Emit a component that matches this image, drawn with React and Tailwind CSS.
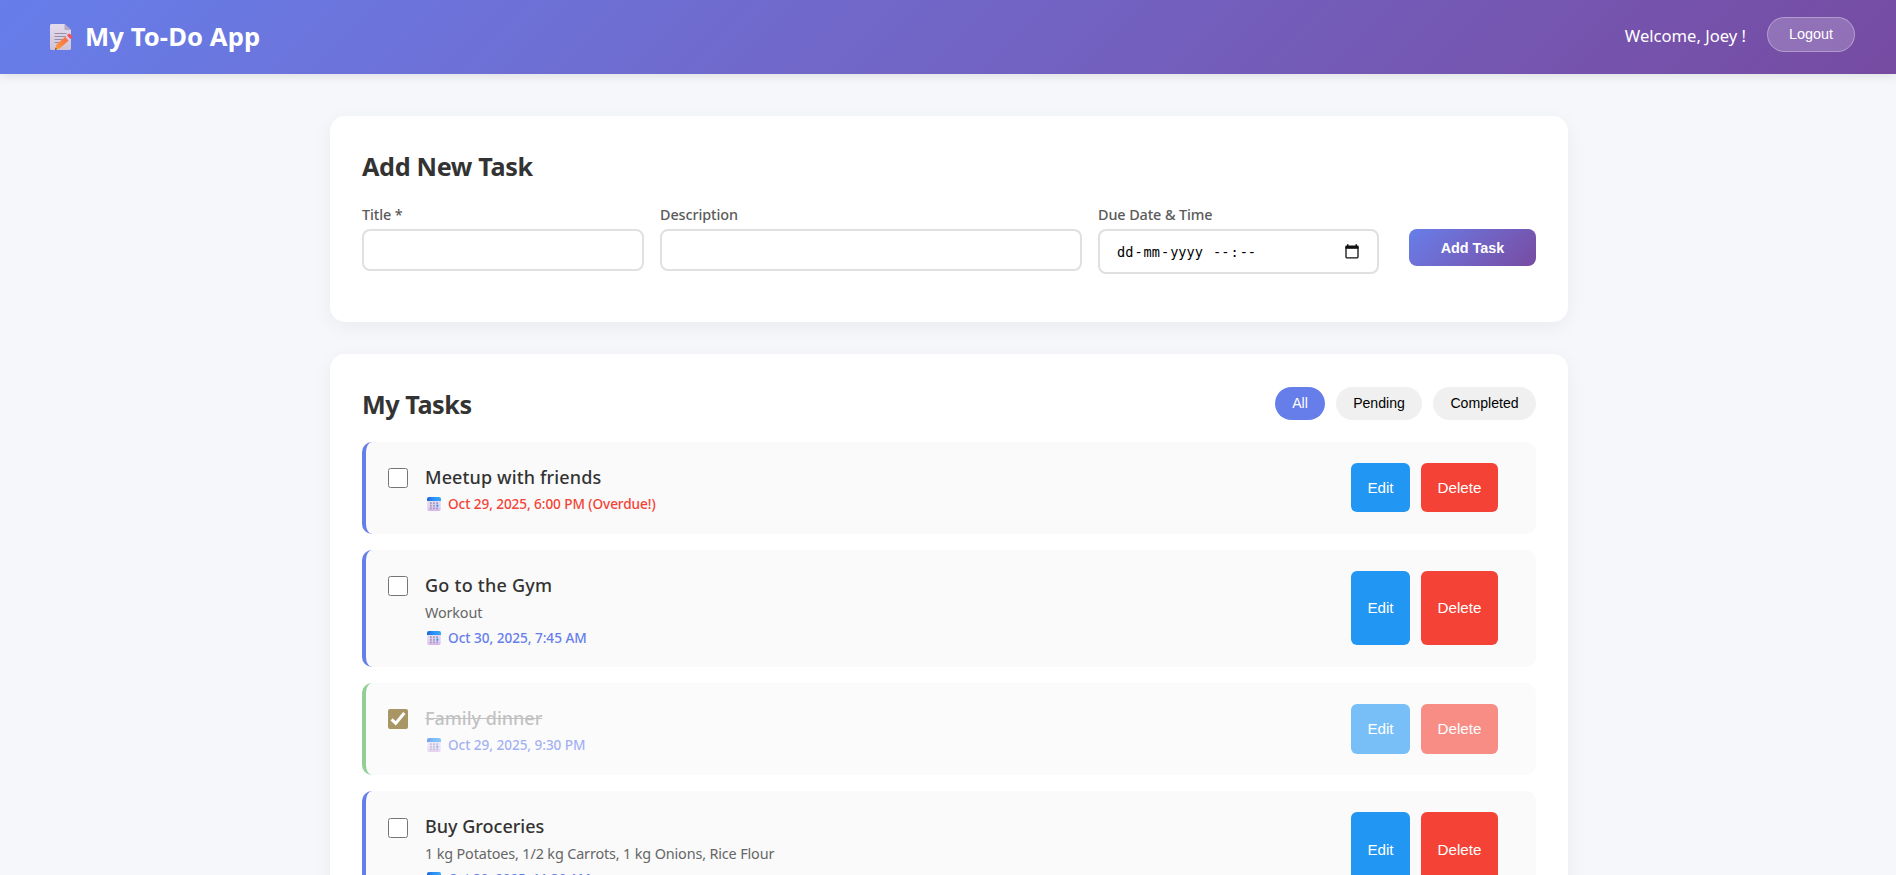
const F = "font-['Noto_Sans',sans-serif]";
const A = "font-['Liberation_Sans',Arial,sans-serif]";

function MemoIcon() {
  return (
    <svg width="24" height="28" viewBox="0 0 24 28" className="block">
      <defs>
        <linearGradient id="paper" x1="0" y1="0" x2="0" y2="1">
          <stop offset="0" stopColor="#e3dcee" />
          <stop offset="1" stopColor="#cfc4d6" />
        </linearGradient>
        <linearGradient id="pencil" x1="1" y1="0" x2="0" y2="1">
          <stop offset="0" stopColor="#f8664a" />
          <stop offset="1" stopColor="#ffa03c" />
        </linearGradient>
      </defs>
      <path d="M1.500 1H14.500l6.500 6v18.500a1.500 1.500 0 0 1-1.500 1.500h-18a1.500 1.500 0 0 1-1.500-1.500v-23A1.500 1.500 0 0 1 1.500 1z" fill="url(#paper)" />
      <path d="M14.500 1l6.500 6h-5.500a1 1 0 0 1-1-1z" fill="#b5a8c4" />
      <path d="M4.500 10.500H16.500M4.500 13.500H16M4.500 16.500H13M4.500 19.500H9" stroke="#9a8fa8" strokeWidth="1.100" />
      <path d="M6.300 21.700L15.300 13.800l3.400 3.800-8.900 7.800-4.600 1.500z" fill="url(#pencil)" />
      <path d="M15.300 13.800l1.700-1.500 3.400 3.800-1.700 1.500z" fill="#dccbe0" />
      <path d="M17 12.300l1.500-1.400q.8-.6 1.500 0l2.100 2.200q.6.800 0 1.500l-1.700 1.500z" fill="#f25252" />
      <path d="M5.700 24.500L6.900 26.300l-1.900.7z" fill="#5b3550" />
    </svg>
  );
}

function CalendarIcon() {
  return (
    <svg width="14" height="14" viewBox="0 0 14 14" className="block shrink-0">
      <defs>
        <linearGradient id="calTop" x1="0" y1="0" x2="1" y2="0">
          <stop offset="0" stopColor="#2264dc" />
          <stop offset="0.450" stopColor="#2b92f5" />
          <stop offset="1" stopColor="#36a6fb" />
        </linearGradient>
        <linearGradient id="calBody" x1="0" y1="0" x2="0" y2="1">
          <stop offset="0" stopColor="#e6def2" />
          <stop offset="0.700" stopColor="#e0d3f0" />
          <stop offset="1" stopColor="#d3b2ea" />
        </linearGradient>
      </defs>
      <rect x="0.300" y="0.500" width="13.400" height="13.500" rx="2" fill="url(#calBody)" />
      <path d="M0 4V2Q0 0 2 0h10q2 0 2 2v2z" fill="url(#calTop)" />
      <g fill="#a195ba">
        <rect x="3" y="5.300" width="1.700" height="1.800" /><rect x="6.100" y="5.300" width="1.700" height="1.800" /><rect x="9.200" y="5.300" width="1.700" height="1.800" />
        <rect x="3" y="7.900" width="1.700" height="1.800" /><rect x="6.100" y="7.900" width="1.700" height="1.800" />
        <rect x="3" y="10.500" width="1.700" height="1.600" /><rect x="6.100" y="10.500" width="1.700" height="1.600" /><rect x="9.200" y="10.500" width="1.700" height="1.600" />
      </g>
      <rect x="9.400" y="7.700" width="1.900" height="2" fill="#2f8df0" />
    </svg>
  );
}

function DateIcon() {
  return (
    <svg width="14" height="15" viewBox="0 0 14 15" className="block">
      <path d="M1 3.500h12V13q0 .8-.8.8H1.800Q1 13.800 1 13z" fill="none" stroke="#111" strokeWidth="1.300" />
      <path d="M.4 4.800V2.200Q.4 1.400 1.200 1.400H2V.3h1.500v1.100h7V.3H12v1.100h.8q.8 0 .8.8v2.600z" fill="#111" />
    </svg>
  );
}

function Check({ done }) {
  return done ? (
    <span className="block size-5 rounded-[2px] bg-[#6f5200]">
      <svg width="20" height="20" viewBox="0 0 20 20"><path d="M3.600 10.400l4.100 4L16.300 4" fill="none" stroke="#fff" strokeWidth="3" /></svg>
    </span>
  ) : (
    <span className="block size-5 rounded-[2.5px] border border-[#767676] bg-white" />
  );
}

const tasks = [
  { title: "Meetup with friends", ts: "tracking-[0.13px]", due: "Oct 29, 2025, 6:00 PM (Overdue!)", ds: "tracking-[-0.08px]", over: true },
  { title: "Go to the Gym", ts: "tracking-[0.25px]", desc: "Workout", due: "Oct 30, 2025, 7:45 AM", ds: "tracking-[-0.02px]" },
  { title: "Family dinner", ts: "tracking-normal", due: "Oct 29, 2025, 9:30 PM", ds: "tracking-[-0.05px]", done: true },
  { title: "Buy Groceries", ts: "tracking-normal", desc: "1 kg Potatoes, 1/2 kg Carrots, 1 kg Onions, Rice Flour", due: "Oct 30, 2025, 11:30 AM", ds: "tracking-[-0.2px]" },
];

function Task({ t }) {
  return (
    <li className={`flex rounded-[10px] border-l-4 bg-[#fafafa] pl-[22px] pr-[38px] pt-[21px] pb-[21.8px] ${t.desc ? "h-[117.1px]" : "h-[92.1px]"} ${t.done ? "border-[#4caf50] opacity-60" : "border-[#667eea]"}`}>
      <div className="pt-[5.2px]"><Check done={t.done} /></div>
      <div className="ml-[17px] flex-1">
        <h3 className={`h-[28px] whitespace-nowrap text-[18px] leading-[28px] font-medium ${t.ts} ${t.done ? "text-[#999] line-through" : "text-[#333]"}`}>{t.title}</h3>
        {t.desc && <p className="h-[26px] whitespace-nowrap text-[14.4px] leading-[27px] tracking-[-0.14px] text-[#666]">{t.desc}</p>}
        <div className={`flex h-[26px] items-center pl-[2px] text-[13.6px] font-medium ${t.ds} ${t.over ? "text-[#f44336]" : "text-[#667eea]"}`}>
          <CalendarIcon /><span className="ml-[7px] whitespace-nowrap">{t.due}</span>
        </div>
      </div>
      <div className={`flex gap-[11px] text-[15.2px] text-white ${A}`}>
        <button className="w-[59px] rounded-md bg-[#2196f3] pt-px">Edit</button>
        <button className="w-[77px] rounded-md bg-[#f44336] pt-px">Delete</button>
      </div>
    </li>
  );
}

export default function App() {
  return (
    <div className={`h-[875px] overflow-hidden bg-[#f5f7fb] ${F}`}>
      <header className="flex h-[74px] items-start justify-between bg-linear-135 from-[#667eea] to-[#764ba2] pl-[50px] pr-[41px] text-white shadow-[0_2px_10px_rgba(0,0,0,0.1)]">
        <h1 className="flex h-[74px] items-center text-[25.6px] font-bold tracking-[0.1px]">
          <MemoIcon /><span className="ml-[11px] pt-px">My To-Do App</span>
        </h1>
        <div className="flex pt-[17px]">
          <span className="mr-[21px] text-[16.6px] leading-[38px]">Welcome, Joey !</span>
          <button className={`h-[35px] w-[88px] rounded-[20px] border border-white/30 bg-white/20 pt-px text-[14.4px] ${A}`}>Logout</button>
        </div>
      </header>
      <main className="mt-[42px] ml-[330px] flex w-[1238px] flex-col gap-8">
        <section className="h-[206px] rounded-[15px] bg-white px-8 pt-8 shadow-[0_5px_20px_rgba(0,0,0,0.05)]">
          <h2 className="h-[57px] text-[25.2px] leading-[37px] font-bold tracking-[-0.33px] text-[#333]">Add New Task</h2>
          <form className="flex items-start text-[14.4px] font-medium tracking-[-0.1px] text-[#5a5a5a]">
            <label className="mr-4 block w-[282px]">
              <span className="block h-6 leading-[20px]">Title *</span>
              <input className="block h-[42px] w-full rounded-lg border-2 border-[#e0e0e0]" />
            </label>
            <label className="mr-4 block w-[422px]">
              <span className="block h-6 leading-[20px]">Description</span>
              <input className="block h-[42px] w-full rounded-lg border-2 border-[#e0e0e0]" />
            </label>
            <label className="block w-[281px]">
              <span className="block h-6 leading-[20px]">Due Date &amp; Time</span>
              <span className="flex h-[45px] items-center justify-between rounded-lg border-2 border-[#e0e0e0] pl-[16px] pr-[18px] text-black">
                <span className="block pt-px font-['DejaVu_Sans_Mono',monospace] text-[13.6px] font-normal tracking-normal whitespace-pre">
                  <span className="px-px">dd</span>-<span className="px-px">mm</span>-<span className="px-px">yyyy</span>{" "}<span className="px-px">--</span>:<span className="px-px">--</span>
                </span>
                <DateIcon />
              </span>
            </label>
            <button className={`mt-6 ml-auto h-[37px] w-[127px] rounded-lg bg-linear-135 from-[#667eea] to-[#764ba2] pt-[2px] text-[14.4px] font-bold tracking-normal text-white ${A}`}>Add Task</button>
          </form>
        </section>
        <section className="rounded-[15px] bg-white p-8 shadow-[0_5px_20px_rgba(0,0,0,0.05)]">
          <div className="flex h-[56.1px] items-start justify-between">
            <h2 className="text-[25.2px] leading-[37px] font-bold tracking-[-0.45px] text-[#333]">My Tasks</h2>
            <div className={`mt-px flex gap-[11px] text-[14.1px] text-black ${A}`}>
              <button className="h-[33px] w-[50px] rounded-[20px] bg-[#667eea] text-white">All</button>
              <button className="h-[33px] w-[86px] rounded-[20px] bg-[#f0f0f0]">Pending</button>
              <button className="h-[33px] w-[103px] rounded-[20px] bg-[#f0f0f0]">Completed</button>
            </div>
          </div>
          <ul className="flex flex-col gap-4">
            {tasks.map((t) => <Task key={t.title} t={t} />)}
          </ul>
        </section>
      </main>
    </div>
  );
}
